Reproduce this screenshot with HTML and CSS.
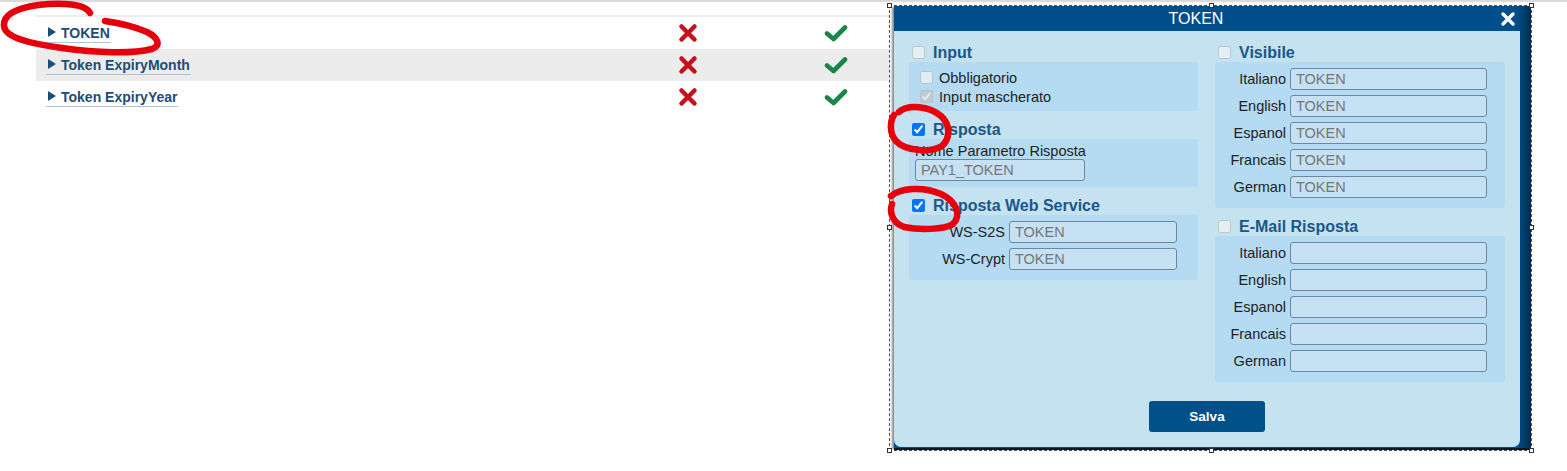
FILE: index.html
```html
<!DOCTYPE html>
<html lang="it">
<head>
  <meta charset="UTF-8">
  <title>Parametri</title>
  <link rel="stylesheet" href="styles.css">
</head>
<body>
  <div class="topline"></div>

  <div class="list">
    <div class="row">
      <div class="name"><a class="field">TOKEN</a></div>
      <div class="mark"><svg class="no" viewBox="0 0 20 20"><path d="M3.5 3.5 L16.5 16.5 M16.5 3.5 L3.5 16.5"/></svg></div>
      <div class="mark"><svg class="yes" viewBox="0 0 24 18"><path d="M3 9.5 L9.5 15 L21 3.5"/></svg></div>
    </div>
    <div class="row alt">
      <div class="name"><a class="field">Token ExpiryMonth</a></div>
      <div class="mark"><svg class="no" viewBox="0 0 20 20"><path d="M3.5 3.5 L16.5 16.5 M16.5 3.5 L3.5 16.5"/></svg></div>
      <div class="mark"><svg class="yes" viewBox="0 0 24 18"><path d="M3 9.5 L9.5 15 L21 3.5"/></svg></div>
    </div>
    <div class="row">
      <div class="name"><a class="field">Token ExpiryYear</a></div>
      <div class="mark"><svg class="no" viewBox="0 0 20 20"><path d="M3.5 3.5 L16.5 16.5 M16.5 3.5 L3.5 16.5"/></svg></div>
      <div class="mark"><svg class="yes" viewBox="0 0 24 18"><path d="M3 9.5 L9.5 15 L21 3.5"/></svg></div>
    </div>
  </div>

  <!-- dialog di modifica del parametro -->
  <div class="frame">
    <div class="dialog">
      <div class="titlebar">
        <span class="title">TOKEN</span>
        <span class="close"><svg viewBox="0 0 16 16"><path d="M3 3 L13 13 M13 3 L3 13"/></svg></span>
      </div>
      <div class="body">
        <div class="cols">
          <div class="col">
            <div class="section">
              <label class="head"><input type="checkbox" disabled> Input</label>
              <div class="panel checks">
                <label class="check"><input type="checkbox" disabled> Obbligatorio</label>
                <label class="check"><input type="checkbox" checked disabled> Input mascherato</label>
              </div>
            </div>
            <div class="section">
              <label class="head"><input type="checkbox" checked> Risposta</label>
              <div class="panel stack">
                <span class="cap">Nome Parametro Risposta</span>
                <input class="text short" type="text" value="PAY1_TOKEN">
              </div>
            </div>
            <div class="section">
              <label class="head"><input type="checkbox" checked> Risposta Web Service</label>
              <div class="panel form ws">
                <span>WS-S2S</span><input class="text" type="text" value="TOKEN">
                <span>WS-Crypt</span><input class="text" type="text" value="TOKEN">
              </div>
            </div>
          </div>

          <div class="col">
            <div class="section">
              <label class="head"><input type="checkbox" disabled> Visibile</label>
              <div class="panel form lang">
                <span>Italiano</span><input class="text" type="text" value="TOKEN">
                <span>English</span><input class="text" type="text" value="TOKEN">
                <span>Espanol</span><input class="text" type="text" value="TOKEN">
                <span>Francais</span><input class="text" type="text" value="TOKEN">
                <span>German</span><input class="text" type="text" value="TOKEN">
              </div>
            </div>
            <div class="section">
              <label class="head"><input type="checkbox" disabled> E-Mail Risposta</label>
              <div class="panel form lang">
                <span>Italiano</span><input class="text" type="text">
                <span>English</span><input class="text" type="text">
                <span>Espanol</span><input class="text" type="text">
                <span>Francais</span><input class="text" type="text">
                <span>German</span><input class="text" type="text">
              </div>
            </div>
          </div>
        </div>
        <div class="actions"><button class="save">Salva</button></div>
      </div>
    </div>
    <i class="handle tl"></i><i class="handle tc"></i><i class="handle tr"></i>
    <i class="handle ml"></i><i class="handle mr"></i>
    <i class="handle bl"></i><i class="handle bc"></i><i class="handle br"></i>
  </div>

  <!-- segni a mano sopra la pagina -->
  <svg class="ink" viewBox="0 0 1567 471">
    <path d="M90 13 C86 4 62 2 38 5 C17 8 3 14 4 26 C5 38 32 44 62 48 C97 53 132 54 152 49 C161 46 159 38 147 32 C133 26 119 23 105 21"/>
    <path d="M899 112 C908 104 929 106 941 116 C951 125 950 139 942 146 C931 153 905 151 896 141 C889 133 890 121 894 115"/>
    <path d="M891 196 C900 188 923 186 941 194 C956 201 962 215 953 224 C944 230 918 230 904 227 C893 223 889 213 892 204"/>
  </svg>
</body>
</html>
```

FILE: styles.css
```css
body {
  margin: 0;
  font-family: "Liberation Sans", Arial, sans-serif;
  background: #fff;
  color: #222;
  position: relative;
  height: 471px;
  overflow: hidden;
}
.topline {
  height: 2px;
  background: #dadada;
}

/* elenco parametri */
.list {
  width: 853px;
  margin: 13px 0 0 36px;
  border-top: 2px solid #ececec;
}
.row {
  display: grid;
  grid-template-columns: 578px 148px 148px 1fr;
  align-items: center;
  height: 32px;
}
.row.alt {
  background: #ececec;
}
.name {
  padding-left: 10px;
}
.field {
  display: inline-flex;
  align-items: center;
  gap: 5px;
  padding: 0 1px 0 2px;
  border-bottom: 1px solid #aec2d6;
  color: #1c4d7a;
  font-size: 14px;
  font-weight: bold;
  line-height: 17px;
  cursor: pointer;
}
.field::before {
  content: "";
  border-left: 8px solid #1c4d7a;
  border-top: 5px solid transparent;
  border-bottom: 5px solid transparent;
  margin-top: -2px;
}
.mark {
  display: flex;
  justify-content: center;
}
.mark svg {
  fill: none;
  stroke-linecap: round;
  stroke-linejoin: round;
}
.no {
  width: 20px;
  height: 20px;
  stroke: #c5111b;
  stroke-width: 4.5;
}
.yes {
  width: 24px;
  height: 18px;
  stroke: #178647;
  stroke-width: 4.6;
}

/* dialog */
.frame {
  position: absolute;
  left: 889px;
  top: 5px;
  width: 643px;
  height: 446px;
  box-sizing: border-box;
  border: 1px dashed #3f4f5f;
}
.dialog {
  margin-left: 4px;
  height: 100%;
  display: flex;
  flex-direction: column;
  background: linear-gradient(to right, #004f8a calc(100% - 14px), #002c52);
  border-bottom: 2px solid #0b1825;
  box-sizing: border-box;
  box-shadow: -3px 0 2px -1px #8a8a8a;
}
.titlebar {
  height: 25px;
  display: flex;
  align-items: center;
  color: #fff;
  flex-shrink: 0;
}
.title {
  flex: 1;
  text-align: center;
  font-size: 16px;
}
.close {
  width: 33px;
  display: flex;
}
.close svg {
  width: 16px;
  height: 16px;
  margin-left: 2px;
  fill: none;
  stroke: #fff;
  stroke-width: 3.4;
  stroke-linecap: round;
}
.body {
  flex: 1;
  margin: 0 11px 1px 0;
  background: #c4e2ef;
  border-radius: 0 0 7px 7px;
  padding: 12px 15px 0;
  display: flex;
  flex-direction: column;
}
.cols {
  display: grid;
  grid-template-columns: 289px 290px;
  gap: 17px;
}
.section + .section {
  margin-top: 9px;
}
.head {
  display: flex;
  align-items: center;
  gap: 8px;
  height: 19px;
  padding-left: 3px;
  color: #1b5788;
  font-size: 16px;
  font-weight: bold;
}
.head input,
.check input {
  width: 13px;
  height: 13px;
  margin: 0;
}
.panel {
  background: #b5dbf2;
  border-radius: 3px;
  font-size: 14.5px;
}
.checks {
  padding: 6px 0 5px 11px;
}
.check {
  display: flex;
  align-items: center;
  gap: 6px;
  height: 19px;
}
.stack {
  display: flex;
  flex-direction: column;
  align-items: flex-start;
  padding: 4px 6px 6px;
}
.cap {
  line-height: 16px;
}
.form {
  display: grid;
  align-items: center;
  column-gap: 4px;
  row-gap: 5px;
  padding: 6px 0 10px;
}
.form span {
  text-align: right;
}
.ws {
  grid-template-columns: 96px 168px;
}
.lang {
  grid-template-columns: 71px 197px;
}
.text {
  box-sizing: border-box;
  height: 22px;
  margin: 0;
  padding: 0 5px;
  border: 1px solid #6d87a1;
  border-radius: 3px;
  background: #c6e1f3;
  color: #767676;
  font-family: "Liberation Sans", Arial, sans-serif;
  font-size: 14.5px;
}
.short {
  width: 170px;
}
.actions {
  margin-top: 19px;
  display: flex;
  justify-content: center;
}
.save {
  width: 116px;
  height: 31px;
  border: none;
  border-radius: 3px;
  background: #00508a;
  color: #fff;
  font-family: "Liberation Sans", Arial, sans-serif;
  font-size: 13.5px;
  font-weight: bold;
}

/* maniglie di ridimensionamento */
.handle {
  position: absolute;
  width: 5px;
  height: 5px;
  background: #fff;
  border: 1px solid #333;
  box-sizing: border-box;
}
.tl { left: -3px; top: -3px; }
.tc { left: 319px; top: -3px; }
.tr { right: -3px; top: -3px; }
.ml { left: -3px; top: 219px; }
.mr { right: -3px; top: 219px; }
.bl { left: -3px; bottom: -3px; }
.bc { left: 319px; bottom: -3px; }
.br { right: -3px; bottom: -3px; }

.ink {
  position: absolute;
  left: 0;
  top: 0;
  width: 1567px;
  height: 471px;
  pointer-events: none;
  fill: none;
  stroke: #e5000c;
  stroke-width: 6.5;
  stroke-linecap: round;
  stroke-linejoin: round;
}
```
